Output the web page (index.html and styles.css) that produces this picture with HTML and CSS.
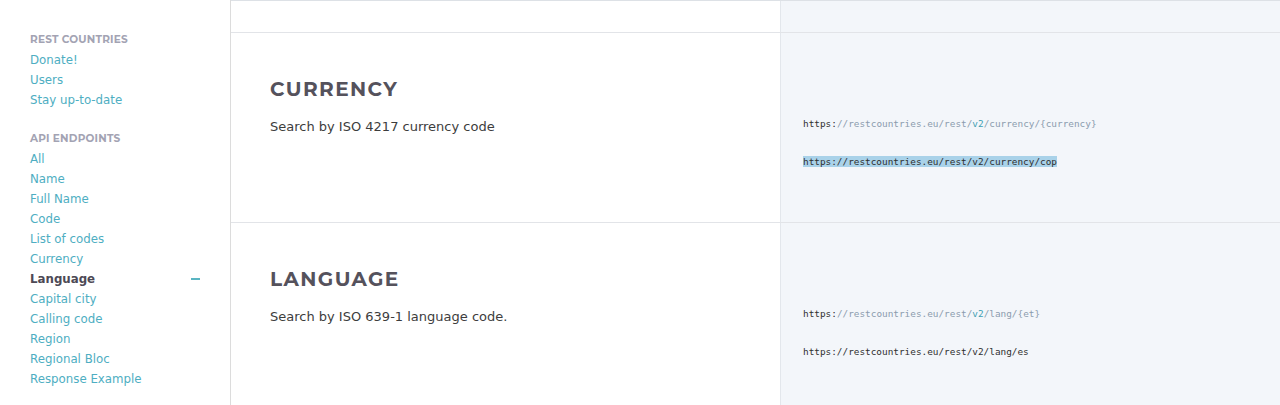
FILE: index.html
```html
<!DOCTYPE html>
<html>
<head>
<meta charset="utf-8">
<link rel="stylesheet" href="styles.css">
</head>
<body>
<div class="page">
  <aside class="sidebar">
    <div class="nav-group">
      <div class="nav-title">REST COUNTRIES</div>
      <a class="nav-link">Donate!</a>
      <a class="nav-link">Users</a>
      <a class="nav-link">Stay up-to-date</a>
    </div>
    <div class="nav-group">
      <div class="nav-title">API ENDPOINTS</div>
      <a class="nav-link">All</a>
      <a class="nav-link">Name</a>
      <a class="nav-link">Full Name</a>
      <a class="nav-link">Code</a>
      <a class="nav-link">List of codes</a>
      <a class="nav-link">Currency</a>
      <a class="nav-link active">Language <span class="minus"></span></a>
      <a class="nav-link">Capital city</a>
      <a class="nav-link">Calling code</a>
      <a class="nav-link">Region</a>
      <a class="nav-link">Regional Bloc</a>
      <a class="nav-link">Response Example</a>
    </div>
  </aside>
  <main class="content">
    <section class="row row-top">
      <div class="doc"></div>
      <div class="code"></div>
    </section>
    <section class="row row-currency">
      <div class="doc">
        <h2 class="doc-title">CURRENCY</h2>
        <p class="doc-text">Search by ISO 4217 currency code</p>
      </div>
      <div class="code">
        <div class="code-line"><span class="c-dark">https:</span><span class="c-gray">//restcountries.eu/rest/</span><span class="c-teal">v2</span><span class="c-gray">/currency/{currency}</span></div>
        <div class="code-line"><span class="c-dark selected">https://restcountries.eu/rest/v2/currency/cop</span></div>
      </div>
    </section>
    <section class="row row-language">
      <div class="doc">
        <h2 class="doc-title">LANGUAGE</h2>
        <p class="doc-text">Search by ISO 639-1 language code.</p>
      </div>
      <div class="code">
        <div class="code-line"><span class="c-dark">https:</span><span class="c-gray">//restcountries.eu/rest/</span><span class="c-teal">v2</span><span class="c-gray">/lang/{et}</span></div>
        <div class="code-line"><span class="c-dark">https://restcountries.eu/rest/v2/lang/es</span></div>
      </div>
    </section>
  </main>
</div>
</body>
</html>
```
FILE: styles.css
```css
* { box-sizing: border-box; }
html, body { margin: 0; padding: 0; }
body {
  background: #fff;
  font-family: "DejaVu Sans", Verdana, sans-serif;
  height: 405px;
  overflow: hidden;
}
.page {
  display: flex;
  height: 405px;
}
.sidebar {
  width: 231px;
  flex: 0 0 231px;
  border-right: 1px solid #dcdcdc;
  padding: 34px 0 0 30px;
}
.nav-group {
  display: flex;
  flex-direction: column;
  margin-bottom: 23px;
}
.nav-title {
  font-family: "Montserrat", "Lato", "Open Sans", sans-serif;
  font-weight: 700;
  font-size: 10.5px;
  color: #a3a3b3;
  letter-spacing: 0.2px;
  line-height: 12px;
  margin-bottom: 4px;
}
.nav-link {
  font-size: 11.8px;
  line-height: 20px;
  color: #4eaec2;
  display: flex;
  align-items: center;
  padding-right: 30px;
}
.nav-link.active {
  color: #4d4955;
  font-weight: 700;
  justify-content: space-between;
}
.minus {
  display: block;
  width: 9px;
  height: 2px;
  background: #5ab5c2;
}
.content {
  flex: 1;
  display: flex;
  flex-direction: column;
  border-top: 1px solid #dde1e6;
}
.row {
  display: flex;
  border-bottom: 1px solid #e2e4e8;
}
.row-top { height: 32px; }
.row-currency { height: 190px; }
.row-language { flex: 1; border-bottom: none; }
.doc {
  width: 549px;
  flex: 0 0 549px;
  padding: 0 0 0 39px;
}
.code {
  flex: 1;
  background: #f3f6fa;
  border-left: 1px solid #e3e7ec;
  padding: 0 0 0 22px;
}
.row-currency .doc, .row-language .doc { padding-top: 44px; }
.row-currency .code, .row-language .code { padding-top: 84px; }
.doc-title {
  margin: 0;
  font-family: "Montserrat", "Lato", "Open Sans", sans-serif;
  font-weight: 700;
  font-size: 20px;
  line-height: 24px;
  letter-spacing: 1.4px;
  color: #55525c;
}
.doc-text {
  margin: 18px 0 0;
  font-size: 13px;
  line-height: 16px;
  color: #3d3d3d;
}
.code-line {
  font-family: "DejaVu Sans Mono", "Liberation Mono", monospace;
  font-size: 9.4px;
  line-height: 14px;
  height: 14px;
  margin-bottom: 24px;
  white-space: nowrap;
}
.c-dark { color: #2f2f2f; }
.c-gray { color: #8b9cae; }
.c-teal { color: #3f9fb2; }
.selected { background: #a9d2e9; }
```
